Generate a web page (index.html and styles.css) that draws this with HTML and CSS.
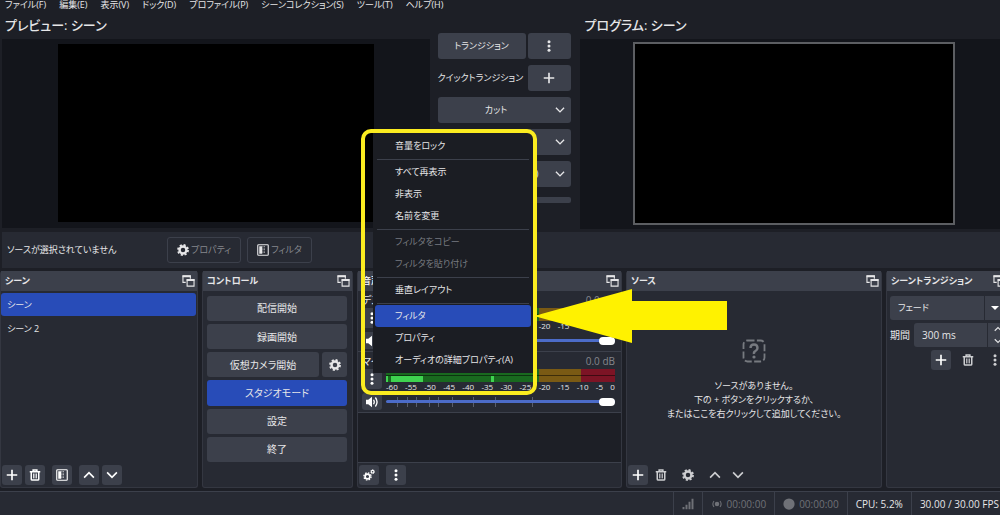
FILE: index.html
```html
<!DOCTYPE html>
<html lang="ja">
<head>
    <meta charset="UTF-8">
    <meta name="viewport" content="width=device-width, initial-scale=1.0">
    <title>OBS Studio</title>
    <link rel="stylesheet" href="styles.css">
</head>
<body>

    <!-- Shared icons -->
    <svg class="sprite" aria-hidden="true">
        <symbol id="plus" viewBox="0 0 16 16"><path d="M8 1v14M1 8h14" fill="none" stroke="currentColor" stroke-width="2.2"/></symbol>
        <symbol id="dots" viewBox="0 0 16 16"><g fill="currentColor"><circle cx="8" cy="2.2" r="2"/><circle cx="8" cy="8" r="2"/><circle cx="8" cy="13.8" r="2"/></g></symbol>
        <symbol id="down" viewBox="0 0 16 16"><path d="M1.500 4.500l6.500 6.500 6.500-6.500" fill="none" stroke="currentColor" stroke-width="2.200"/></symbol>
        <symbol id="up" viewBox="0 0 16 16"><path d="M1.500 11.500l6.500-6.500 6.500 6.500" fill="none" stroke="currentColor" stroke-width="2.200"/></symbol>
        <symbol id="trash" viewBox="0 0 16 16"><path d="M1 3.5h14M5.5 3V1.2h5V3M3 4v9.5q0 1.3 1.3 1.3h7.4q1.3 0 1.3-1.3V4" fill="none" stroke="currentColor" stroke-width="2"/><path d="M6 6v6.5M8 6v6.5M10 6v6.5" stroke="currentColor" stroke-width="1.1"/></symbol>
        <symbol id="gear" viewBox="0 0 16 16"><circle cx="8" cy="8" r="4.6" fill="none" stroke="currentColor" stroke-width="3.2"/><circle cx="8" cy="8" r="6.7" fill="none" stroke="currentColor" stroke-width="2.4" stroke-dasharray="2.8 2.46"/></symbol>
        <symbol id="gears" viewBox="0 0 16 16"><g fill="none" stroke="currentColor"><circle cx="6" cy="10" r="3.2" stroke-width="2.2"/><circle cx="6" cy="10" r="4.8" stroke-width="1.8" stroke-dasharray="2 1.77"/><circle cx="12.8" cy="3.6" r="1.8" stroke-width="1.4"/><circle cx="12.8" cy="3.6" r="2.7" stroke-width="1" stroke-dasharray="1.1 1.02"/></g></symbol>
        <symbol id="filter" viewBox="0 0 16 16"><rect x="1" y="1" width="14" height="14" rx="1" fill="none" stroke="currentColor" stroke-width="1.5"/><path d="M3 3h4v10H3z" fill="currentColor"/><path d="M8 3v10M10 3v10" stroke="currentColor" stroke-width="1" stroke-dasharray="1 1"/></symbol>
        <symbol id="float" viewBox="0 0 14 13"><path d="M4 8H1V1h8v3" fill="none" stroke="currentColor" stroke-width="1.2"/><path d="M0.5 0.5h9v2h-9zM5 4.5h8.500v2H5z" fill="currentColor"/><path d="M5.500 5h7.500v7H5.500z" fill="none" stroke="currentColor" stroke-width="1.2"/></symbol>
        <symbol id="speaker" viewBox="0 0 16 16"><path d="M0 5h3l5-4v14l-5-4H0z" fill="currentColor"/><path d="M10 5q2 3 0 6M12.500 2q4.500 6 0 12" fill="none" stroke="currentColor" stroke-width="1.8"/></symbol>
        <symbol id="signal" viewBox="0 0 16 16"><path d="M2 12v3M6 9v6M10 5v10M14 1v14" stroke="currentColor" stroke-width="2.6"/></symbol>
        <symbol id="stream" viewBox="0 0 16 16"><circle cx="8" cy="8" r="3" fill="currentColor"/><path d="M4 4q-3 4 0 8M12 4q3 4 0 8" fill="none" stroke="currentColor" stroke-width="1.4"/></symbol>
        <symbol id="record" viewBox="0 0 16 16"><circle cx="8" cy="8" r="7.500" fill="currentColor"/></symbol>
        <symbol id="missing" viewBox="0 0 24 24"><rect x="1.500" y="1.500" width="21" height="21" rx="4" fill="none" stroke="currentColor" stroke-width="1.800" stroke-dasharray="7 2.400"/><path d="M8.500 9q0-3.500 3.500-3.500T15.500 9q0 2-2 3t-1.500 3" fill="none" stroke="currentColor" stroke-width="2.400"/><circle cx="12" cy="18" r="1.600" fill="currentColor"/></symbol>
    </svg>

    <div class="app">

        <!-- Menu bar -->
        <nav class="menubar">
            <a href="#">ファイル(F)</a>
            <a href="#">編集(E)</a>
            <a href="#">表示(V)</a>
            <a href="#">ドック(D)</a>
            <a href="#">プロファイル(P)</a>
            <a href="#">シーンコレクション(S)</a>
            <a href="#">ツール(T)</a>
            <a href="#">ヘルプ(H)</a>
        </nav>

        <!-- Preview / transitions / program -->
        <main class="studio">
            <section class="view preview">
                <h1>プレビュー: シーン</h1>
                <div class="stage"><div class="canvas"></div></div>
            </section>

            <section class="quick">
                <div class="quick-row">
                    <button class="btn grow">トランジション</button>
                    <button class="btn side" aria-label="メニュー"><svg class="icon"><use href="#dots"/></svg></button>
                </div>
                <div class="quick-row">
                    <span class="grow">クイックトランジション</span>
                    <button class="btn side" aria-label="追加"><svg class="icon"><use href="#plus"/></svg></button>
                </div>
                <button class="btn drop"><span>カット</span><svg class="icon small"><use href="#down"/></svg></button>
                <button class="btn drop"><span>フェード (300ms)</span><svg class="icon small"><use href="#down"/></svg></button>
                <button class="btn drop"><span>暗転フェード (300ms)</span><svg class="icon small"><use href="#down"/></svg></button>
                <input class="tbar" type="range" value="0" aria-label="Tバー">
            </section>

            <section class="view">
                <h1>プログラム: シーン</h1>
                <div class="stage"><div class="canvas live"></div></div>
            </section>
        </main>

        <!-- Source info -->
        <div class="context">
            <span class="context-text">ソースが選択されていません</span>
            <button class="ghost"><svg class="icon"><use href="#gear"/></svg>プロパティ</button>
            <button class="ghost"><svg class="icon"><use href="#filter"/></svg>フィルタ</button>
        </div>

        <!-- Docks -->
        <div class="docks">
            <section class="dock">
                <header><h2>シーン</h2><svg class="float"><use href="#float"/></svg></header>
                <ul class="scenes">
                    <li class="active">シーン</li>
                    <li>シーン 2</li>
                </ul>
                <div class="tools">
                    <button class="tool" aria-label="追加"><svg class="icon"><use href="#plus"/></svg></button>
                    <button class="tool" aria-label="削除"><svg class="icon"><use href="#trash"/></svg></button>
                    <button class="tool apart" aria-label="フィルタ"><svg class="icon"><use href="#filter"/></svg></button>
                    <button class="tool apart" aria-label="上へ"><svg class="icon"><use href="#up"/></svg></button>
                    <button class="tool" aria-label="下へ"><svg class="icon"><use href="#down"/></svg></button>
                </div>
            </section>

            <section class="dock">
                <header><h2>コントロール</h2><svg class="float"><use href="#float"/></svg></header>
                <div class="controls">
                    <button class="btn">配信開始</button>
                    <button class="btn">録画開始</button>
                    <div class="control-row">
                        <button class="btn grow">仮想カメラ開始</button>
                        <button class="btn cog" aria-label="仮想カメラ設定"><svg class="icon"><use href="#gear"/></svg></button>
                    </div>
                    <button class="btn active">スタジオモード</button>
                    <button class="btn">設定</button>
                    <button class="btn">終了</button>
                </div>
            </section>

            <section class="dock mixer">
                <header><h2>音声ミキサー</h2><svg class="float"><use href="#float"/></svg></header>
                <div class="channel">
                    <div class="channel-name"><span>デスクトップ音声</span><span class="db">0.0 dB</span></div>
                    <button class="tool" aria-label="音声メニュー"><svg class="icon"><use href="#dots"/></svg></button>
                    <div class="levels">
                        <div class="meter"></div>
                        <div class="scale"><span>-60</span><span>-55</span><span>-50</span><span>-45</span><span>-40</span><span>-35</span><span>-30</span><span>-25</span><span>-20</span><span>-15</span><span>-10</span><span>-5</span><span>0</span></div>
                    </div>
                    <button class="tool mute" aria-label="ミュート"><svg class="icon"><use href="#speaker"/></svg></button>
                    <input class="volume" type="range" value="100" aria-label="デスクトップ音声の音量">
                </div>
                <div class="channel">
                    <div class="channel-name"><span>マイク</span><span class="db">0.0 dB</span></div>
                    <button class="tool" aria-label="マイクメニュー"><svg class="icon"><use href="#dots"/></svg></button>
                    <div class="levels">
                        <div class="meter speaking"></div>
                        <div class="scale"><span>-60</span><span>-55</span><span>-50</span><span>-45</span><span>-40</span><span>-35</span><span>-30</span><span>-25</span><span>-20</span><span>-15</span><span>-10</span><span>-5</span><span>0</span></div>
                    </div>
                    <button class="tool mute" aria-label="ミュート"><svg class="icon"><use href="#speaker"/></svg></button>
                    <input class="volume" type="range" value="100" aria-label="マイクの音量">
                </div>
                <div class="mixer-empty"></div>
                <div class="tools">
                    <button class="tool" aria-label="詳細設定"><svg class="icon"><use href="#gears"/></svg></button>
                    <button class="tool apart" aria-label="メニュー"><svg class="icon"><use href="#dots"/></svg></button>
                </div>
            </section>

            <section class="dock">
                <header><h2>ソース</h2><svg class="float"><use href="#float"/></svg></header>
                <div class="empty">
                    <svg class="missing"><use href="#missing"/></svg>
                    <p>ソースがありません。<br>下の + ボタンをクリックするか、<br>またはここを右クリックして追加してください。</p>
                </div>
                <div class="tools">
                    <button class="tool" aria-label="追加"><svg class="icon"><use href="#plus"/></svg></button>
                    <button class="tool flat" aria-label="削除"><svg class="icon"><use href="#trash"/></svg></button>
                    <button class="tool flat apart" aria-label="プロパティ"><svg class="icon"><use href="#gear"/></svg></button>
                    <button class="tool flat apart" aria-label="上へ"><svg class="icon"><use href="#up"/></svg></button>
                    <button class="tool flat" aria-label="下へ"><svg class="icon"><use href="#down"/></svg></button>
                </div>
            </section>

            <section class="dock">
                <header><h2>シーントランジション</h2><svg class="float"><use href="#float"/></svg></header>
                <div class="transition">
                    <div class="select-box">
                        <select aria-label="トランジション"><option>フェード</option></select>
                        <span class="caret"></span>
                    </div>
                    <div class="duration">
                        <label for="duration">期間</label>
                        <div class="spin">
                            <input type="text" id="duration" value="300 ms">
                            <span class="spin-arrows"><svg><use href="#up"/></svg><svg><use href="#down"/></svg></span>
                        </div>
                    </div>
                    <div class="transition-tools">
                        <button class="tool" aria-label="追加"><svg class="icon"><use href="#plus"/></svg></button>
                        <button class="tool flat" aria-label="削除"><svg class="icon"><use href="#trash"/></svg></button>
                        <button class="tool flat" aria-label="メニュー"><svg class="icon"><use href="#dots"/></svg></button>
                    </div>
                </div>
            </section>
        </div>

        <!-- Status bar -->
        <footer class="status">
            <span class="dim"><svg class="icon"><use href="#signal"/></svg></span>
            <span class="dim"><svg class="icon"><use href="#stream"/></svg>00:00:00</span>
            <span class="dim"><svg class="icon"><use href="#record"/></svg>00:00:00</span>
            <span>CPU: 5.2%</span>
            <span>30.00 / 30.00 FPS</span>
        </footer>
    </div>

    <!-- Audio source context menu -->
    <div class="popup">
        <button>音量をロック</button>
        <hr>
        <button>すべて再表示</button>
        <button>非表示</button>
        <button>名前を変更</button>
        <hr>
        <button disabled>フィルタをコピー</button>
        <button disabled>フィルタを貼り付け</button>
        <hr>
        <button>垂直レイアウト</button>
        <hr>
        <button class="active">フィルタ</button>
        <button>プロパティ</button>
        <button>オーディオの詳細プロパティ(A)</button>
    </div>
    <div class="frame"></div>
    <svg class="arrow" viewBox="0 0 194 54"><path d="M0 27L98 0v12h95v29H98v13z" fill="#fff200"/></svg>

</body>
</html>
```
FILE: styles.css
```css
* {
    margin: 0;
    padding: 0;
    box-sizing: border-box;
}

body {
    font-family: "Open Sans", "Noto Sans CJK JP", sans-serif;
    font-size: 10px;
    line-height: 14px;
    font-feature-settings: "palt";
    background: #1d1f26;
    color: #e6e6e8;
    overflow: hidden;
}

button, input, select {
    font: inherit;
    font-feature-settings: inherit;
    color: inherit;
    border: none;
    background: none;
}

.sprite {
    display: none;
}

.icon {
    width: 12px;
    height: 12px;
    flex: none;
}

.icon.small {
    width: 10px;
    height: 10px;
}

/* The window runs a little past the right edge */
.app {
    display: flex;
    flex-direction: column;
    width: calc(100% + 9px);
    height: 100vh;
}

/* Menu bar */
.menubar {
    display: flex;
    gap: 13px;
    padding-left: 5px;
    height: 12px;
    font-size: 9px;
    line-height: 10px;
}

.menubar a {
    color: inherit;
    text-decoration: none;
}

/* Studio mode */
.studio {
    display: grid;
    grid-template-columns: 1fr 150px 1fr;
    font-size: 9px;
}

.view h1 {
    font-size: 13px;
    font-weight: 500;
    line-height: 27px;
    padding-left: 5px;
}

.stage {
    background: #13151b;
    padding: 5px 0 6px;
}

.preview .stage {
    margin-left: 2px;
}

.canvas {
    width: 74%;
    aspect-ratio: 16 / 9;
    margin: 0 auto;
    background: #000;
}

.canvas.live {
    outline: 2px solid #5c5e62;
}

.quick {
    display: flex;
    flex-direction: column;
    gap: 6px;
    padding: 21px 9px 0 8px;
}

.quick-row {
    display: flex;
    align-items: center;
    gap: 2px;
    white-space: nowrap;
}

.grow {
    flex: 1;
    min-width: 0;
}

.btn {
    display: flex;
    align-items: center;
    justify-content: center;
    height: 26px;
    background: #3c404b;
    border-radius: 3px;
}

.btn.side {
    flex: none;
    width: 43px;
}

.btn.active {
    background: #284cb8;
}

.drop {
    padding-right: 6px;
}

.drop span {
    flex: 1;
}

.tbar {
    appearance: none;
    height: 6px;
    margin-top: 4px;
    background: #3c404b;
    border-radius: 2px;
}

.tbar::-webkit-slider-thumb {
    appearance: none;
    width: 14px;
    height: 6px;
    background: #fff;
}

/* Source info */
.context {
    display: flex;
    align-items: center;
    gap: 6px;
    height: 36px;
    margin: 3px 0 3px 2px;
    padding-left: 5px;
    background: #272a33;
    font-size: 9px;
}

.context-text {
    width: 154px;
}

.ghost {
    display: flex;
    align-items: center;
    justify-content: center;
    gap: 2px;
    height: 26px;
    padding: 0 9px;
    border: 1px solid #3c404b;
    border-radius: 3px;
    color: #85878d;
}

.ghost .icon {
    color: #e6e6e8;
}

/* Docks */
.docks {
    flex: 1;
    display: grid;
    grid-template-columns: 198fr 151fr 265fr 256fr 123fr;
    gap: 4px;
    min-height: 0;
}

.dock {
    display: flex;
    flex-direction: column;
    min-width: 0;
    background: #272a33;
    border: 1px solid #343741;
    border-top: none;
    border-radius: 3px;
}

.dock header {
    display: flex;
    align-items: center;
    justify-content: space-between;
    height: 20px;
    padding: 0 2px 0 4px;
    background: #3c404b;
}

.dock h2 {
    font-size: 9px;
    font-weight: 600;
    white-space: nowrap;
}

.float {
    flex: none;
    width: 13px;
    height: 12px;
}

.scenes {
    flex: 1;
    list-style: none;
    padding: 2px 1px 0 0;
    font-size: 9px;
}

.scenes li {
    margin-bottom: 1px;
    padding: 0 6px;
    line-height: 23px;
    border-radius: 3px;
}

.scenes .active {
    background: #284cb8;
}

.tools {
    display: flex;
    gap: 3px;
    padding: 2px 1px;
}

.tool {
    display: flex;
    align-items: center;
    justify-content: center;
    width: 20px;
    height: 20px;
    background: #3c404b;
    border-radius: 3px;
    color: #fff;
}

.tool.flat {
    background: none;
    color: #cdced1;
}

.tool.apart {
    margin-left: 4px;
}

/* Controls */
.controls {
    flex: 1;
    display: flex;
    flex-direction: column;
    gap: 3px;
    padding: 5px 5px 25px 4px;
}

.controls > * {
    flex: 1;
}

.control-row {
    display: flex;
    gap: 3px;
}

.control-row .btn {
    height: auto;
}

.cog {
    width: 25px;
}

/* Audio mixer */
.channel {
    display: grid;
    grid-template-columns: 20px 1fr;
    column-gap: 4px;
    padding: 1px 6px 1px 4px;
    height: 61px;
    border-bottom: 1px solid #3c404b;
}

.channel-name {
    grid-column: 1 / 3;
    display: flex;
    justify-content: space-between;
    line-height: 16px;
}

.db {
    color: #85878d;
}

.levels {
    height: 24px;
}

.meter {
    height: 13px;
    background:
        linear-gradient(rgba(0, 0, 0, 0.5), rgba(0, 0, 0, 0.5)) 0 6px / 100% 1px no-repeat,
        linear-gradient(to right, #19691f 67%, #7a5a14 67% 85%, #7c1425 85%);
}

.meter.speaking {
    background:
        linear-gradient(to right, #3fd350 1%, transparent 1% 2%, #3fd350 2% 16%, transparent 16% 46%, #3fd350 46% 47%, transparent 47%) 0 7px / 100% 6px no-repeat,
        linear-gradient(rgba(0, 0, 0, 0.5), rgba(0, 0, 0, 0.5)) 0 6px / 100% 1px no-repeat,
        linear-gradient(to right, #19691f 67%, #7a5a14 67% 85%, #7c1425 85%);
}

.scale {
    display: flex;
    justify-content: space-between;
    font-size: 8px;
    line-height: 10px;
}

.mute {
    height: 17px;
}

.volume {
    --tick: linear-gradient(#5a5e6b, #5a5e6b);
    appearance: none;
    width: 100%;
    height: 17px;
    background:
        var(--tick) 5% 4px / 1px 10px no-repeat,
        var(--tick) 9% 4px / 1px 10px no-repeat,
        var(--tick) 13% 4px / 1px 10px no-repeat,
        var(--tick) 19% 4px / 1px 10px no-repeat,
        var(--tick) 23% 4px / 1px 10px no-repeat,
        var(--tick) 29% 4px / 1px 10px no-repeat,
        var(--tick) 38% 4px / 1px 10px no-repeat,
        var(--tick) 48% 4px / 1px 10px no-repeat,
        var(--tick) 64% 4px / 1px 10px no-repeat;
}

.volume::-webkit-slider-runnable-track {
    height: 3px;
    background: #4c6cc9;
    border-radius: 2px;
}

.volume::-webkit-slider-thumb {
    appearance: none;
    width: 16px;
    height: 8px;
    margin-top: -2px;
    background: #fff;
    border-radius: 4px;
}

.mixer-empty {
    flex: 1;
    background: #1d1f26;
    border-bottom: 1px solid #3c404b;
}

/* Sources */
.empty {
    flex: 1;
    display: flex;
    flex-direction: column;
    align-items: center;
    justify-content: center;
    gap: 16px;
    padding-top: 6px;
    font-size: 9px;
    text-align: center;
    white-space: nowrap;
}

.missing {
    width: 24px;
    height: 24px;
    color: #777a80;
}

/* Scene transitions */
.transition {
    display: flex;
    flex-direction: column;
    gap: 3px;
    padding: 5px 0 0 3px;
}

.select-box {
    display: flex;
    align-items: center;
    background: #3c404b;
    border-radius: 3px;
    font-size: 9px;
}

.select-box select {
    appearance: none;
    flex: 1;
    height: 24px;
    padding-left: 8px;
    border-right: 1px solid #272a33;
}

.caret {
    margin: 0 9px 0 6px;
    border: 4px solid transparent;
    border-top-color: #fff;
    border-bottom: none;
}

.duration {
    display: flex;
    align-items: center;
    gap: 4px;
    white-space: nowrap;
}

.spin {
    flex: 1;
    display: flex;
    min-width: 0;
    height: 24px;
    background: #3c404b;
    border-radius: 3px;
}

.spin input {
    flex: 1;
    min-width: 0;
    padding-left: 8px;
}

.spin-arrows {
    display: flex;
    flex-direction: column;
    align-items: center;
    justify-content: space-around;
    width: 21px;
    border-left: 1px solid #272a33;
}

.spin-arrows svg {
    width: 8px;
    height: 8px;
}

.transition-tools {
    display: flex;
    justify-content: flex-end;
    gap: 7px;
    padding-right: 3px;
}

/* Status bar */
.status {
    display: flex;
    justify-content: flex-end;
    height: 24px;
    margin-top: 3px;
    padding-right: 2px;
    background: #272a33;
    border-top: 1px solid #3c404b;
}

.status span {
    display: flex;
    align-items: center;
    gap: 4px;
    padding: 0 8px;
    border-left: 1px solid #3c404b;
    white-space: nowrap;
}

.status .dim {
    color: #6f7177;
}

/* Context menu and its highlight */
.popup {
    position: absolute;
    left: 373px;
    top: 133px;
    width: 160px;
    padding: 2px;
    background: #1b1d23;
    font-size: 9px;
}

.popup button {
    display: block;
    width: 100%;
    height: 22px;
    padding-left: 20px;
    border-radius: 3px;
    text-align: left;
    white-space: nowrap;
}

.popup button:disabled {
    color: #777a80;
}

.popup .active {
    background: #284cb8;
}

.popup hr {
    height: 1px;
    margin: 2px 2px 1px;
    border: none;
    background: #3c404b;
}

.frame {
    position: absolute;
    left: 361px;
    top: 129px;
    width: 176px;
    height: 266px;
    border: 4px solid #fbec20;
    border-radius: 10px;
}

.arrow {
    position: absolute;
    left: 534px;
    top: 289px;
    width: 194px;
    height: 54px;
}
```
